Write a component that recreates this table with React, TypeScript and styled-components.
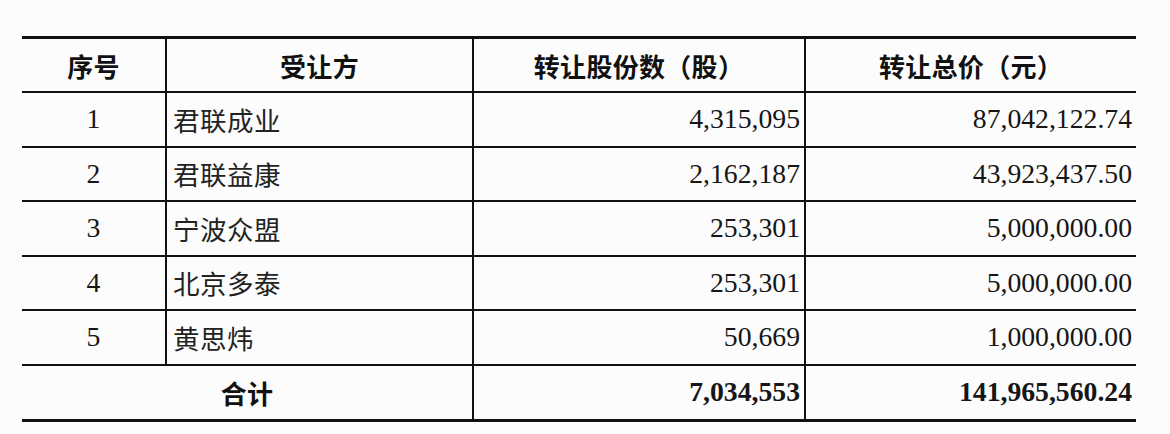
import React from "react";
import styled, { createGlobalStyle } from "styled-components";

const Global = createGlobalStyle`
  html, body { margin: 0; padding: 0; background: #fcfcfc; }
  body { font-family: "Liberation Serif", "Noto Sans CJK SC", serif; color: #161616; }
`;

const Page = styled.div`
  width: 1170px;
  height: 434px;
  box-sizing: border-box;
  padding: 36px 0 0 22px;
  background: #fcfcfc;
`;

const Grid = styled.div`
  display: grid;
  width: 1114px;
  grid-template-columns: 143px 307px 332px 332px;
  border-top: 3px solid #111;
  border-bottom: 3px solid #111;
`;

const Cell = styled.div<{ $align?: "left" | "center" | "right"; $first?: boolean; $span?: number; $h: number; $last?: boolean }>`
  box-sizing: border-box;
  height: ${(p) => p.$h}px;
  display: flex;
  align-items: center;
  justify-content: ${(p) => (p.$align === "left" ? "flex-start" : p.$align === "right" ? "flex-end" : "center")};
  padding: ${(p) => (p.$align === "left" ? "0 0 0 6px" : p.$align === "right" ? "0 4px 0 0" : "0")};
  border-left: ${(p) => (p.$first ? "none" : "2px solid #111")};
  border-bottom: ${(p) => (p.$last ? "none" : "2px solid #111")};
  grid-column: span ${(p) => p.$span ?? 1};
  white-space: nowrap;
`;

const HeadText = styled.span`
  font-family: "Noto Sans CJK SC", sans-serif;
  font-weight: 700;
  font-size: 26px;
  letter-spacing: 0.3px;
  color: #111;
`;

const NumText = styled.span<{ $bold?: boolean }>`
  font-family: "Liberation Serif", serif;
  font-size: 27.7px;
  font-weight: ${(p) => (p.$bold ? 700 : 400)};
  color: #161616;
`;

const NameText = styled.span`
  font-family: "Noto Sans CJK SC", sans-serif;
  font-weight: 400;
  font-size: 26.5px;
  letter-spacing: 0.5px;
  color: #222;
`;

const rows = [
  ["1", "君联成业", "4,315,095", "87,042,122.74"],
  ["2", "君联益康", "2,162,187", "43,923,437.50"],
  ["3", "宁波众盟", "253,301", "5,000,000.00"],
  ["4", "北京多泰", "253,301", "5,000,000.00"],
  ["5", "黄思炜", "50,669", "1,000,000.00"],
];

const heads = ["序号", "受让方", "转让股份数（股）", "转让总价（元）"];

export default function App() {
  return (
    <>
      <Global />
      <Page>
        <Grid>
          {heads.map((h, i) => (
            <Cell key={h} $h={54} $first={i === 0}>
              <HeadText>{h}</HeadText>
            </Cell>
          ))}
          {rows.map((r) => (
            <React.Fragment key={r[0]}>
              <Cell $h={54.5} $first>
                <NumText>{r[0]}</NumText>
              </Cell>
              <Cell $h={54.5} $align="left">
                <NameText>{r[1]}</NameText>
              </Cell>
              <Cell $h={54.5} $align="right">
                <NumText>{r[2]}</NumText>
              </Cell>
              <Cell $h={54.5} $align="right">
                <NumText>{r[3]}</NumText>
              </Cell>
            </React.Fragment>
          ))}
          <Cell $h={53} $first $span={2} $last>
            <HeadText>合计</HeadText>
          </Cell>
          <Cell $h={53} $align="right" $last>
            <NumText $bold>7,034,553</NumText>
          </Cell>
          <Cell $h={53} $align="right" $last>
            <NumText $bold>141,965,560.24</NumText>
          </Cell>
        </Grid>
      </Page>
    </>
  );
}
